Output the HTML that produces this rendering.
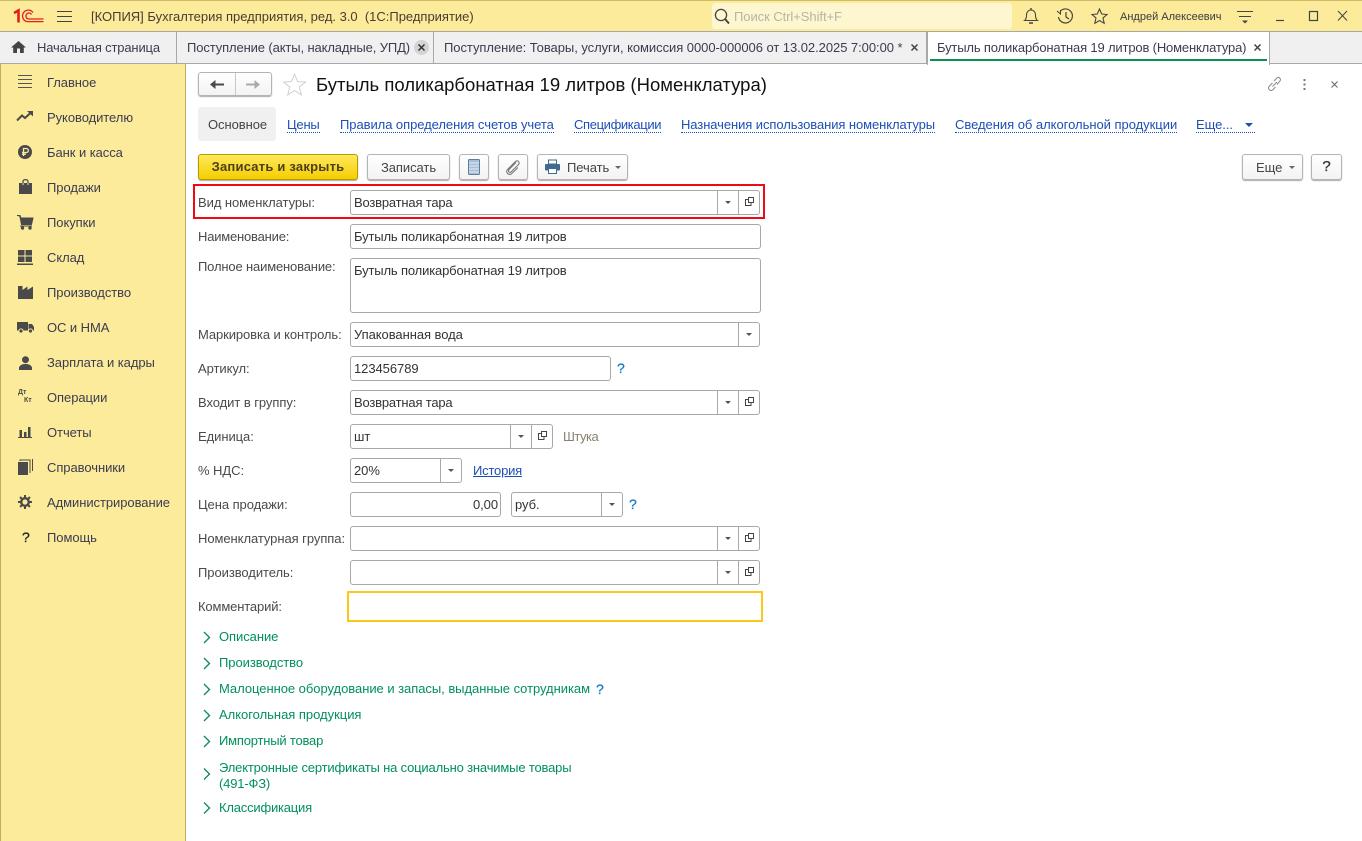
<!DOCTYPE html>
<html lang="ru"><head><meta charset="utf-8"><title>Бутыль</title>
<style>
*{box-sizing:border-box}
html,body{margin:0;padding:0;width:1362px;height:841px;overflow:hidden;background:#fff;font:13px/14px "Liberation Sans",Arial,sans-serif;letter-spacing:-.06px;color:#333}
.a{position:absolute}
.t{position:absolute;white-space:nowrap;line-height:14px}
svg{position:absolute;overflow:visible}
.tab{position:absolute;top:32px;height:32px;background:#f0f0f0;border-right:1px solid #a8a8a8;border-bottom:1px solid #a8a8a8}
.m{position:absolute;left:47px;white-space:nowrap;color:#3c3c50;margin-top:1px}
.l{position:absolute;left:198px;white-space:nowrap;color:#4a4a4a;margin-top:1px}
.f{position:absolute;height:25px;border:1px solid #a8a8a8;border-radius:3px;background:#fff;color:#333}
.f>span{position:absolute;left:3px;top:5px;white-space:nowrap}
.b{position:absolute;top:-1px;height:25px;border-left:1px solid #a8a8a8}
.dd{position:absolute;top:10px;width:0;height:0;border:3px solid transparent;border-top:3px solid #555;border-bottom:0}
.btn{position:absolute;top:154px;height:26px;border:1px solid #b4b4b4;border-radius:3px;background:linear-gradient(#fff,#f3f3f3);box-shadow:0 1px 1px #aaa;color:#444}
.lk{position:absolute;top:118px;white-space:nowrap;color:#1c4fb5;border-bottom:1px dotted #1c4fb5;line-height:14px;height:15px}
.g{position:absolute;left:219px;white-space:nowrap;color:#00905a;margin-top:1px}
.q{position:absolute;color:#1a7ac0;font-size:14px;-webkit-text-stroke:.3px #1a7ac0}
</style></head><body>

<!-- title bar -->
<div class="a" style="left:0;top:0;width:1362px;height:32px;background:#fbeb9b;border-top:1px solid #d0bd6a;border-bottom:1px solid #a8a8a8"></div>
<svg style="left:13px;top:9px" width="31" height="15" viewBox="0 0 31 15">
<path d="M1 4 5.500 1.500V13.500" fill="none" stroke="#e0201b" stroke-width="2.600"/>
<path d="M20 3.500A5.800 5.800 0 1 0 14 12.600H30.500M18.500 5.500A3 3 0 1 0 15.500 10H30.500" fill="none" stroke="#e0201b" stroke-width="1.300"/>
</svg>
<svg style="left:57px;top:10px" width="15" height="12"><path d="M0 1.500H15M0 6.500H15M0 11.500H15" stroke="#444" stroke-width="1"/></svg>
<div class="t" style="left:91px;top:10px;color:#4a3c30;letter-spacing:-.01px">[КОПИЯ] Бухгалтерия предприятия, ред. 3.0&nbsp; (1С:Предприятие)</div>
<div class="a" style="left:712px;top:3px;width:300px;height:26px;background:#fdf6cf;border-radius:3px"></div>
<svg style="left:714px;top:8px" width="16" height="17"><circle cx="7" cy="7" r="5.600" fill="none" stroke="#444" stroke-width="1.300"/><path d="M11 11 15 15.500" stroke="#444" stroke-width="2"/></svg>
<div class="t" style="left:734px;top:10px;color:#b5b5a8">Поиск Ctrl+Shift+F</div>
<svg style="left:1023px;top:8px" width="16" height="17" fill="none" stroke="#444"><path d="M1.500 12.500C3.500 11 3.500 9 3.500 7 3.500 4 5.500 2 8 2S12.500 4 12.500 7C12.500 9 12.500 11 14.500 12.500Z"/><path d="M8 0V2M6 15H10" stroke-width="1.400"/></svg>
<svg style="left:1057px;top:8px" width="17" height="17" fill="none" stroke="#444" stroke-width="1.200"><path d="M3 3.500A7 7 0 1 1 1.500 9"/><path d="M0 3 3.500 6V2" stroke-width="1"/><path d="M9 4V9L12 11"/></svg>
<svg style="left:1091px;top:8px" width="17" height="16"><path d="M8.500 1 10.700 6 16 6.500 12 10 13.200 15.300 8.500 12.500 3.800 15.300 5 10 1 6.500 6.300 6Z" fill="none" stroke="#444" stroke-width="1.100"/></svg>
<div class="t" style="left:1120px;top:10px;font-size:11px;letter-spacing:0;color:#3c3c3c">Андрей Алексеевич</div>
<svg style="left:1237px;top:11px" width="16" height="14"><path d="M0 .5H16M2 5.500H14" stroke="#444"/><path d="M5 9.500H11L8 12.500Z" fill="#444"/></svg>
<svg style="left:1276px;top:11px" width="72" height="11" fill="none" stroke="#444"><path d="M0 9.500H8" stroke-width="1.200"/><rect x="33.500" y=".5" width="8" height="9" stroke-width="1.200"/><path d="M62 0 71 9.500M71 0 62 9.500"/></svg>

<!-- tabs bar -->
<div class="a" style="left:0;top:32px;width:1362px;height:32px;background:#f0f0f0;border-bottom:1px solid #a8a8a8"></div>
<div class="tab" style="left:0;width:177px"></div>
<svg style="left:11px;top:41px" width="15" height="12"><path d="M7.500 0 15 6.500H12.800V12H9V7.500H6V12H2.200V6.500H0Z" fill="#444"/></svg>
<div class="t" style="left:37px;top:41px;color:#3c3c50;letter-spacing:-.16px">Начальная страница</div>
<div class="tab" style="left:177px;width:257px"></div>
<div class="t" style="left:187px;top:41px;color:#3c3c50;letter-spacing:-.12px">Поступление (акты, накладные, УПД)</div>
<div class="a" style="left:414px;top:40px;width:15px;height:15px;border-radius:8px;background:#d4d4d4"></div>
<svg style="left:418px;top:44px" width="7" height="7"><path d="M.5 .5 6.500 6.500M6.500 .5 .5 6.500" stroke="#333" stroke-width="1.500"/></svg>
<div class="tab" style="left:434px;width:493px"></div>
<div class="t" style="left:444px;top:41px;color:#3c3c50;letter-spacing:-.05px">Поступление: Товары, услуги, комиссия 0000-000006 от 13.02.2025 7:00:00 *</div>
<svg style="left:911px;top:44px" width="7" height="7"><path d="M.5 .5 6.500 6.500M6.500 .5 .5 6.500" stroke="#444" stroke-width="1.500"/></svg>
<div class="a" style="left:927px;top:32px;width:343px;height:33px;background:#fff;border-left:1px solid #a8a8a8;border-right:1px solid #a8a8a8"></div>
<div class="t" style="left:937px;top:41px;color:#3c3c50;letter-spacing:-.16px">Бутыль поликарбонатная 19 литров (Номенклатура)</div>
<svg style="left:1254px;top:44px" width="7" height="7"><path d="M.5 .5 6.500 6.500M6.500 .5 .5 6.500" stroke="#444" stroke-width="1.500"/></svg>
<div class="a" style="left:930px;top:59px;width:337px;height:2px;background:#0a9150"></div>

<!-- sidebar -->
<div class="a" style="left:0;top:64px;width:186px;height:777px;background:#fbeb9b;border-left:1px solid #bdae60;border-right:1px solid #bdae60"></div>
<svg style="left:17px;top:74px" width="16" height="16"><path d="M1 1.500H15M1 5.500H15M1 9.500H15M1 13.500H15" stroke="#555"/></svg>
<div class="m" style="top:75px">Главное</div>
<svg style="left:17px;top:111px" width="16" height="12"><path d="M0 9.500 5 4.500 8 7 14 1.500" fill="none" stroke="#4a4a4a" stroke-width="2"/><path d="M10 0H16V5.500Z" fill="#4a4a4a"/></svg>
<div class="m" style="top:110px">Руководителю</div>
<svg style="left:18px;top:145px" width="14" height="14"><circle cx="7" cy="7" r="7" fill="#4a4a4a"/><path d="M5.500 11V3.500H8.300A2 2 0 0 1 8.300 7.500H4M4 9.200H8" fill="none" stroke="#fbeb9b" stroke-width="1.300"/></svg>
<div class="m" style="top:145px">Банк и касса</div>
<svg style="left:19px;top:179px" width="13" height="15"><path d="M0 4H13V15H0Z" fill="#4a4a4a"/><path d="M4 7V2.500C4 0 9 0 9 2.500V7" fill="none" stroke="#4a4a4a" stroke-width="1.300"/><path d="M4 4V6M9 4V6" stroke="#fbeb9b"/></svg>
<div class="m" style="top:180px">Продажи</div>
<svg style="left:17px;top:215px" width="16" height="15"><path d="M0 .5H3L4 3H16L14.500 9.500H4.500L3 2" fill="#4a4a4a" stroke="#4a4a4a"/><circle cx="5.500" cy="13" r="1.700" fill="#4a4a4a"/><circle cx="13" cy="13" r="1.700" fill="#4a4a4a"/><path d="M3 11H15" stroke="#4a4a4a"/></svg>
<div class="m" style="top:215px">Покупки</div>
<svg style="left:17px;top:250px" width="16" height="15" fill="#4a4a4a"><rect x="1" y="0" width="6.500" height="5.500"/><rect x="8.500" y="0" width="6.500" height="5.500"/><rect x="1" y="6.500" width="6.500" height="5.500"/><rect x="8.500" y="6.500" width="6.500" height="5.500"/><rect x="0" y="13.500" width="16" height="1.500"/></svg>
<div class="m" style="top:250px">Склад</div>
<svg style="left:18px;top:285px" width="15" height="14"><path d="M0 14V1H4.500V5L9.500 1.500V5L15 1.500V14Z" fill="#4a4a4a"/></svg>
<div class="m" style="top:285px">Производство</div>
<svg style="left:17px;top:322px" width="17" height="11" fill="#4a4a4a"><rect x="0" y="0" width="11" height="8.500"/><path d="M11.500 2H15L17 5V8.500H11.500Z"/><circle cx="4" cy="9" r="2.100" stroke="#fbeb9b"/><circle cx="13.500" cy="9" r="2.100" stroke="#fbeb9b"/></svg>
<div class="m" style="top:320px">ОС и НМА</div>
<svg style="left:19px;top:356px" width="13" height="14" fill="#4a4a4a"><circle cx="6.500" cy="3.700" r="3.500"/><path d="M0 14V11.500C1 8.500 4 8 6.500 8S12 8.500 13 11.500V14Z"/></svg>
<div class="m" style="top:355px">Зарплата и кадры</div>
<div class="t" style="left:18px;top:389px;font-size:7px;line-height:8px;font-weight:bold;letter-spacing:0;color:#4a4a4a">Дт</div>
<div class="t" style="left:24px;top:397px;font-size:7px;line-height:8px;font-weight:bold;letter-spacing:0;color:#4a4a4a">Кт</div>
<div class="m" style="top:390px">Операции</div>
<svg style="left:18px;top:427px" width="14" height="11" fill="#4a4a4a"><rect x="1.500" y="3" width="2.500" height="7"/><rect x="6" y="5" width="2.500" height="5"/><rect x="10" y="0" width="2.500" height="10"/><rect x="0" y="10" width="14" height="1"/></svg>
<div class="m" style="top:425px">Отчеты</div>
<svg style="left:18px;top:459px" width="15" height="16"><rect x="0" y="3" width="10" height="13" fill="#4a4a4a"/><path d="M2 2V1H12V14M14.500 0V12" fill="none" stroke="#4a4a4a"/></svg>
<div class="m" style="top:460px">Справочники</div>
<svg style="left:18px;top:495px" width="14" height="14"><circle cx="7" cy="7" r="3.800" fill="none" stroke="#4a4a4a" stroke-width="2.400"/><path d="M7 0V14M0 7H14M2 2 12 12M12 2 2 12" stroke="#4a4a4a" stroke-width="2" stroke-dasharray="2.500 9 2.500 9" fill="none"/></svg>
<div class="m" style="top:495px">Администрирование</div>
<div class="t" style="left:22px;top:530px;font-size:14px;color:#222;-webkit-text-stroke:.3px #222">?</div>
<div class="m" style="top:530px">Помощь</div>

<!-- form head -->
<div class="a" style="left:198px;top:72px;width:74px;height:24px;border:1px solid #b4b4b4;border-radius:3px;background:linear-gradient(#fff,#f3f3f3);box-shadow:0 1px 1px #aaa"></div>
<div class="a" style="left:235px;top:73px;width:1px;height:22px;background:#c8c8c8"></div>
<svg style="left:210px;top:80px" width="14" height="9"><path d="M14 4.500H4" stroke="#4a4a4a" stroke-width="2"/><path d="M5.500 0 0 4.500 5.500 9Z" fill="#4a4a4a"/></svg>
<svg style="left:246px;top:80px" width="14" height="9"><path d="M0 4.500H10" stroke="#aaa" stroke-width="2"/><path d="M8.500 0 14 4.500 8.500 9Z" fill="#aaa"/></svg>
<svg style="left:283px;top:73px" width="23" height="23"><path d="M11.500 1 14.500 8.500 22.500 9 16.300 14 18.300 22 11.500 17.500 4.700 22 6.700 14 .5 9 8.500 8.500Z" fill="#fff" stroke="#d0d0d0"/></svg>
<div class="t" style="left:316px;top:74px;font-size:18.500px;line-height:21px;letter-spacing:0;color:#111">Бутыль поликарбонатная 19 литров (Номенклатура)</div>
<svg style="left:1267px;top:76px" width="16" height="16" fill="none" stroke="#888"><path d="M7 5 10 2C11.500 .5 14.500 2.500 13 5L10 8.500M8.500 11 5.500 14C3.500 15.500 .5 13 2 10.500L5.500 7M5.500 10.500 10 6"/></svg>
<svg style="left:1303px;top:79px" width="3" height="11" fill="#777"><rect x=".5" width="2" height="2"/><rect x=".5" y="4.500" width="2" height="2"/><rect x=".5" y="9" width="2" height="2"/></svg>
<svg style="left:1331px;top:81px" width="7" height="7"><path d="M.5 .5 6.500 6.500M6.500 .5 .5 6.500" stroke="#666"/></svg>

<!-- form tabs -->
<div class="a" style="left:198px;top:107px;width:78px;height:34px;background:#f0f0f0;border-radius:3px"></div>
<div class="t" style="left:208px;top:118px;color:#444">Основное</div>
<div class="lk" style="left:287px;letter-spacing:-.2px">Цены</div>
<div class="lk" style="left:340px">Правила определения счетов учета</div>
<div class="lk" style="left:574px;letter-spacing:-.36px">Спецификации</div>
<div class="lk" style="left:681px;letter-spacing:-.08px">Назначения использования номенклатуры</div>
<div class="lk" style="left:955px;letter-spacing:-.03px">Сведения об алкогольной продукции</div>
<div class="lk" style="left:1196px;width:59px">Еще...</div>
<div class="a" style="left:1245px;top:123px;width:0;height:0;border:4px solid transparent;border-top:4px solid #1c4fb5;border-bottom:0"></div>

<!-- command bar -->
<div class="btn" style="left:198px;width:160px;border-color:#b39b00;background:linear-gradient(#ffe95c,#f5ce00);text-align:center;line-height:24px;font-weight:bold;letter-spacing:.22px;color:#4a4020">Записать и закрыть</div>
<div class="btn" style="left:367px;width:83px;text-align:center;line-height:25px">Записать</div>
<div class="btn" style="left:459px;width:30px"></div>
<svg style="left:468px;top:159px" width="12" height="16"><rect x=".5" y=".5" width="11" height="15" rx="1" fill="#a8c0d6" stroke="#5d7f9e"/><path d="M1 4H11M1 7H11M1 10H11M1 13H11" stroke="#e4edf4"/></svg>
<div class="btn" style="left:498px;width:30px"></div>
<svg style="left:506px;top:160px" width="15" height="15" fill="none" stroke="#777" stroke-width="1.100"><path d="M10 2.500 3 9.500C1.500 11 3.500 13.500 5 12L12.500 4.500C14.500 2.500 11.500 -.5 9.500 1.500L1.500 9.500C-1 12 3 16.500 5.800 13.500L12 7.500"/></svg>
<div class="btn" style="left:537px;width:91px"></div>
<svg style="left:545px;top:160px" width="15" height="14"><path d="M3.500 0H11.500V4H3.500Z" fill="#fff" stroke="#406a90"/><rect x="0" y="4" width="15" height="6.500" rx="1" fill="#406a90"/><path d="M3.500 8.500H11.500V13.500H3.500Z" fill="#fff" stroke="#406a90"/></svg>
<div class="t" style="left:567px;top:161px;color:#444">Печать</div>
<div class="dd" style="left:615px;top:166px;border-top-color:#666"></div>
<div class="btn" style="left:1242px;width:61px"></div>
<div class="t" style="left:1256px;top:161px;color:#444">Еще</div>
<div class="dd" style="left:1289px;top:166px;border-top-color:#666"></div>
<div class="btn" style="left:1311px;width:31px;text-align:center;line-height:24px;font-size:15px;color:#333;-webkit-text-stroke:.3px #333">?</div>

<!-- highlight -->
<div class="a" style="left:193px;top:184px;width:572px;height:35px;border:2px solid #ee0a14"></div>

<!-- form rows -->
<div class="l" style="top:195px">Вид номенклатуры:</div>
<div class="f" style="left:350px;top:190px;width:410px"><span style="letter-spacing:-.19px">Возвратная тара</span><div class="b" style="left:366px"></div><div class="dd" style="left:374px"></div><div class="b" style="left:387px"></div>
<svg style="left:394px;top:6px" width="9" height="9" fill="none" stroke="#444"><rect x="3.500" y=".5" width="5" height="5"/><path d="M3 2.500H.5V8.500H6V6"/></svg></div>

<div class="l" style="top:229px;letter-spacing:-.2px">Наименование:</div>
<div class="f" style="left:350px;top:224px;width:411px"><span style="letter-spacing:-.15px">Бутыль поликарбонатная 19 литров</span></div>

<div class="l" style="top:259px;letter-spacing:-.16px">Полное наименование:</div>
<div class="f" style="left:350px;top:258px;width:411px;height:55px"><span style="top:5px;letter-spacing:-.15px">Бутыль поликарбонатная 19 литров</span></div>

<div class="l" style="top:327px;letter-spacing:-.1px">Маркировка и контроль:</div>
<div class="f" style="left:350px;top:322px;width:410px"><span>Упакованная вода</span><div class="b" style="left:387px"></div><div class="dd" style="left:395px"></div></div>

<div class="l" style="top:361px">Артикул:</div>
<div class="f" style="left:350px;top:356px;width:261px"><span>123456789</span></div>
<div class="q" style="left:617px;top:361px">?</div>

<div class="l" style="top:395px">Входит в группу:</div>
<div class="f" style="left:350px;top:390px;width:410px"><span style="letter-spacing:-.19px">Возвратная тара</span><div class="b" style="left:366px"></div><div class="dd" style="left:374px"></div><div class="b" style="left:387px"></div>
<svg style="left:394px;top:6px" width="9" height="9" fill="none" stroke="#444"><rect x="3.500" y=".5" width="5" height="5"/><path d="M3 2.500H.5V8.500H6V6"/></svg></div>

<div class="l" style="top:429px">Единица:</div>
<div class="f" style="left:350px;top:424px;width:203px"><span>шт</span><div class="b" style="left:159px"></div><div class="dd" style="left:167px"></div><div class="b" style="left:180px"></div>
<svg style="left:187px;top:6px" width="9" height="9" fill="none" stroke="#444"><rect x="3.500" y=".5" width="5" height="5"/><path d="M3 2.500H.5V8.500H6V6"/></svg></div>
<div class="t" style="left:563px;top:430px;color:#8a8070;letter-spacing:-.5px">Штука</div>

<div class="l" style="top:463px">% НДС:</div>
<div class="f" style="left:350px;top:458px;width:112px"><span>20%</span><div class="b" style="left:89px"></div><div class="dd" style="left:97px"></div></div>
<div class="t" style="left:473px;top:464px;color:#1c4fb5;text-decoration:underline;letter-spacing:-.2px">История</div>

<div class="l" style="top:497px">Цена продажи:</div>
<div class="f" style="left:350px;top:492px;width:151px"><span style="left:auto;right:2px">0,00</span></div>
<div class="f" style="left:511px;top:492px;width:112px"><span>руб.</span><div class="b" style="left:89px"></div><div class="dd" style="left:97px"></div></div>
<div class="q" style="left:629px;top:497px">?</div>

<div class="l" style="top:531px">Номенклатурная группа:</div>
<div class="f" style="left:350px;top:526px;width:410px"><div class="b" style="left:366px"></div><div class="dd" style="left:374px"></div><div class="b" style="left:387px"></div>
<svg style="left:394px;top:6px" width="9" height="9" fill="none" stroke="#444"><rect x="3.500" y=".5" width="5" height="5"/><path d="M3 2.500H.5V8.500H6V6"/></svg></div>

<div class="l" style="top:565px">Производитель:</div>
<div class="f" style="left:350px;top:560px;width:410px"><div class="b" style="left:366px"></div><div class="dd" style="left:374px"></div><div class="b" style="left:387px"></div>
<svg style="left:394px;top:6px" width="9" height="9" fill="none" stroke="#444"><rect x="3.500" y=".5" width="5" height="5"/><path d="M3 2.500H.5V8.500H6V6"/></svg></div>

<div class="l" style="top:599px;letter-spacing:-.14px">Комментарий:</div>
<div class="a" style="left:347px;top:591px;width:416px;height:31px;border:2px solid #fbc71b"></div>

<!-- collapsed groups -->
<svg style="left:203px;top:631px" width="8" height="180" fill="none" stroke="#0a8a55" stroke-width="1.300"><path d="M1 1 6.500 6.500 1 12M1 27 6.500 32.500 1 38M1 53 6.500 58.500 1 64M1 79 6.500 84.500 1 90M1 105 6.500 110.500 1 116M1 137.500 6.500 143 1 148.500M1 171.500 6.500 177 1 182.500"/></svg>
<div class="g" style="top:629px">Описание</div>
<div class="g" style="top:655px">Производство</div>
<div class="g" style="top:681px;letter-spacing:-.04px">Малоценное оборудование и запасы, выданные сотрудникам</div>
<div class="q" style="left:596px;top:682px">?</div>
<div class="g" style="top:707px;letter-spacing:-.02px">Алкогольная продукция</div>
<div class="g" style="top:733px;letter-spacing:-.2px">Импортный товар</div>
<div class="g" style="top:759px;line-height:16px;letter-spacing:-.17px">Электронные сертификаты на социально значимые товары<br>(491-ФЗ)</div>
<div class="g" style="top:800px;letter-spacing:-.2px">Классификация</div>

</body></html>
